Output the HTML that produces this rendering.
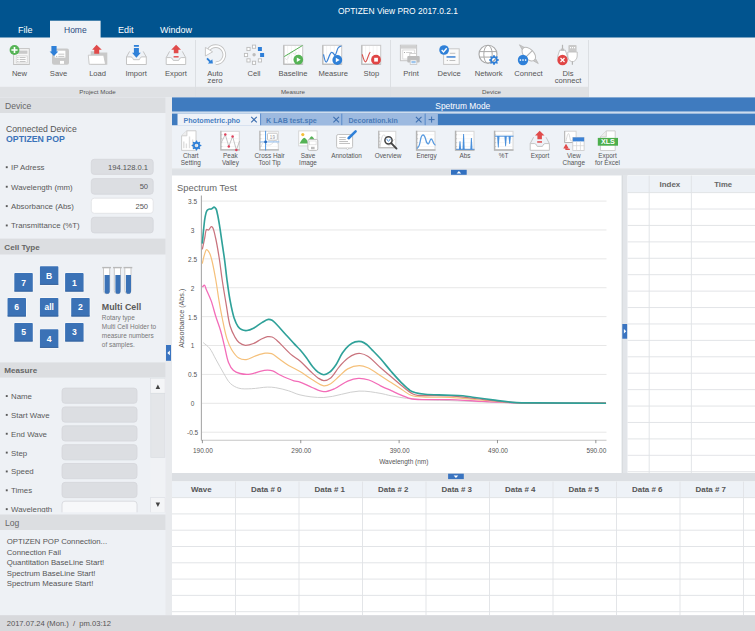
<!DOCTYPE html>
<html><head><meta charset="utf-8">
<style>
*{margin:0;padding:0;box-sizing:border-box}
html,body{width:755px;height:631px;overflow:hidden;background:#eef1f5}
svg{position:absolute;left:0;top:0;font-family:"Liberation Sans", sans-serif}
</style></head><body>
<svg width="755" height="631" viewBox="0 0 755 631">

<rect x="0" y="0" width="755" height="38" fill="#01548f"/>
<rect x="0" y="37.5" width="755" height="59.5" fill="#eff2f6"/>
<rect x="50" y="20.7" width="50.6" height="17.5" fill="#eff2f6"/>
<text x="338" y="13.6" font-size="8.45" fill="#fff" font-weight="normal" text-anchor="start" >OPTIZEN View PRO 2017.0.2.1</text>
<text x="18" y="32.6" font-size="9" fill="#fff" font-weight="normal" text-anchor="start" >File</text>
<text x="64" y="32.6" font-size="8.5" fill="#2b4b80" font-weight="normal" text-anchor="start" >Home</text>
<text x="118" y="32.6" font-size="9" fill="#fff" font-weight="normal" text-anchor="start" >Edit</text>
<text x="160" y="32.6" font-size="8.97" fill="#fff" font-weight="normal" text-anchor="start" >Window</text>
<rect x="0" y="86.8" width="195" height="10.4" fill="#dfe1e4"/>
<rect x="196" y="86.8" width="194" height="10.4" fill="#dfe1e4"/>
<rect x="391" y="86.8" width="197" height="10.4" fill="#dfe1e4"/>
<line x1="195.5" y1="40" x2="195.5" y2="97" stroke="#dcdfe3" stroke-width="1"/>
<line x1="390.5" y1="40" x2="390.5" y2="97" stroke="#dcdfe3" stroke-width="1"/>
<line x1="588.5" y1="40" x2="588.5" y2="97" stroke="#dcdfe3" stroke-width="1"/>
<text x="97.5" y="93.8" font-size="6.2" fill="#555" font-weight="normal" text-anchor="middle" >Project Mode</text>
<text x="293" y="93.8" font-size="6.2" fill="#555" font-weight="normal" text-anchor="middle" >Measure</text>
<text x="491.5" y="93.8" font-size="6.2" fill="#555" font-weight="normal" text-anchor="middle" >Device</text>
<text x="19.5" y="76.3" font-size="7.6" fill="#555" font-weight="normal" text-anchor="middle" >New</text>
<text x="58.5" y="76.3" font-size="7.6" fill="#555" font-weight="normal" text-anchor="middle" >Save</text>
<text x="97.6" y="76.3" font-size="7.6" fill="#555" font-weight="normal" text-anchor="middle" >Load</text>
<text x="136.2" y="76.3" font-size="7.6" fill="#555" font-weight="normal" text-anchor="middle" >Import</text>
<text x="176" y="76.3" font-size="7.6" fill="#555" font-weight="normal" text-anchor="middle" >Export</text>
<text x="215" y="76.3" font-size="7.6" fill="#555" font-weight="normal" text-anchor="middle" >Auto</text>
<text x="215" y="83.2" font-size="7.6" fill="#555" font-weight="normal" text-anchor="middle" >zero</text>
<text x="254" y="76.3" font-size="7.6" fill="#555" font-weight="normal" text-anchor="middle" >Cell</text>
<text x="293" y="76.3" font-size="7.6" fill="#555" font-weight="normal" text-anchor="middle" >Baseline</text>
<text x="333.3" y="76.3" font-size="7.6" fill="#555" font-weight="normal" text-anchor="middle" >Measure</text>
<text x="371.4" y="76.3" font-size="7.6" fill="#555" font-weight="normal" text-anchor="middle" >Stop</text>
<text x="411" y="76.3" font-size="7.6" fill="#555" font-weight="normal" text-anchor="middle" >Print</text>
<text x="449.2" y="76.3" font-size="7.6" fill="#555" font-weight="normal" text-anchor="middle" >Device</text>
<text x="488.7" y="76.3" font-size="7.6" fill="#555" font-weight="normal" text-anchor="middle" >Network</text>
<text x="528.5" y="76.3" font-size="7.6" fill="#555" font-weight="normal" text-anchor="middle" >Connect</text>
<text x="568" y="76.3" font-size="7.6" fill="#555" font-weight="normal" text-anchor="middle" >Dis</text>
<text x="568" y="83.2" font-size="7.6" fill="#555" font-weight="normal" text-anchor="middle" >connect</text>
<rect x="13.6" y="48.6" width="15.7" height="15.9" fill="#f6f6f6" stroke="#c4c4c4" stroke-width="1"/>
<rect x="15.8" y="50.6" width="11.6" height="3.2" fill="#c9c9c9"/>
<rect x="16.2" y="55.9" width="11" height="7" fill="#fff" stroke="#d0d0d0" stroke-width="0.8"/>
<rect x="17.4" y="57.1" width="1" height="1" fill="#aaa"/><rect x="19.6" y="57.15" width="6" height="0.9" fill="#bdbdbd"/>
<rect x="17.4" y="59.0" width="1" height="1" fill="#aaa"/><rect x="19.6" y="59.05" width="6" height="0.9" fill="#bdbdbd"/>
<rect x="17.4" y="60.9" width="1" height="1" fill="#aaa"/><rect x="19.6" y="60.949999999999996" width="6" height="0.9" fill="#bdbdbd"/>
<circle cx="14.5" cy="50" r="4.9" fill="#55b355"/>
<path d="M14.5,46.9 V53.1 M11.4,50 H17.6" stroke="#fff" stroke-width="1.6"/>
<rect x="52" y="48.6" width="17" height="16.1" rx="2" fill="#c9c9c9"/>
<rect x="54.7" y="50.7" width="10.7" height="6.9" fill="#fff"/>
<rect x="58.3" y="53.7" width="6" height="0.9" fill="#c0c0c0"/><rect x="58.3" y="55.9" width="6" height="0.9" fill="#c0c0c0"/><rect x="56.2" y="55.9" width="1" height="1" fill="#aaa"/>
<rect x="60" y="60.9" width="4" height="2.9" fill="#fff"/>
<path d="M51.4,46 H56.6 V51.4 H58.3 L54,55.9 L49.6,51.4 H51.4 Z" fill="#2f80d8"/>
<path d="M90.7,51.2 H98 L99.5,52.6 H107.3 V64.7 H90.7 Z" fill="#c9c9c9"/>
<path d="M88.3,55.2 H103.7 L105.6,64.3 H89.2 Z" fill="#fff" stroke="#c5c5c5" stroke-width="0.9" stroke-linejoin="round"/>
<path d="M96.6,44.8 L101.8,49.7 H99.2 V53.8 H94.2 V49.7 H92.1 Z" fill="#e04b4b"/>
<path d="M126.5,56.9 L129.6,51.4 M146.3,56.9 L143.20000000000002,51.4" stroke="#c4c4c4" stroke-width="1" fill="none"/>
<path d="M126.5,56.9 H131.0 Q132.0,56.9 132.8,58.4 L133.5,59.699999999999996 H139.3 L140.0,58.4 Q140.8,56.9 141.8,56.9 H146.3 V64.5 H126.5 Z" fill="#fff" stroke="#c4c4c4" stroke-width="1" stroke-linejoin="round"/>
<rect x="133.9" y="45" width="5" height="1.8" fill="#2f80d8"/>
<path d="M133.9,48.1 H138.9 V52.8 H140.8 L136.4,57.8 L132,52.8 H133.9 Z" fill="#2f80d8"/>
<path d="M166.2,57.6 L169.6,51.4 M185.7,57.6 L182.29999999999998,51.4" stroke="#c4c4c4" stroke-width="1" fill="none"/>
<path d="M166.2,57.6 H170.7 Q171.7,57.6 172.5,59.1 L173.2,60.4 H178.7 L179.39999999999998,59.1 Q180.2,57.6 181.2,57.6 H185.7 V64.5 H166.2 Z" fill="#fff" stroke="#c4c4c4" stroke-width="1" stroke-linejoin="round"/>
<path d="M176.1,44.8 L181,49.7 H178.4 V53.3 H173.8 V49.7 H171.2 Z" fill="#e04b4b"/>
<rect x="173.6" y="56.1" width="5" height="1.4" fill="#e04b4b"/>
<path d="M215.70,63.25 A8.55,8.55 0 1 0 208.45,50.17" fill="none" stroke="#c2c2c2" stroke-width="3.6"/>
<path d="M215.70,63.25 A8.55,8.55 0 1 0 208.45,50.17" fill="none" stroke="#fff" stroke-width="1.8"/>
<path d="M205.4,47.4 L205.4,56 L212.6,51.8 Z" fill="#fff" stroke="#c2c2c2" stroke-width="0.9" stroke-linejoin="round"/>
<path d="M207,58.4 L210.6,62" stroke="#2f80d8" stroke-width="1.8"/><path d="M212.9,63.6 L207.8,63.6 L212.3,59.2 Z" fill="#2f80d8"/>
<circle cx="254.1" cy="54.7" r="1.7" fill="#bdbdbd"/>
<rect x="252.4" y="45.1" width="3.2" height="3.2" fill="#fff" stroke="#bcbcbc" stroke-width="0.9"/>
<rect x="257.9" y="47" width="4" height="4" fill="#2f7fd8"/>
<rect x="260.1" y="53" width="4" height="4" fill="#2f7fd8"/>
<rect x="258.29999999999995" y="58.8" width="3.2" height="3.2" fill="#fff" stroke="#bcbcbc" stroke-width="0.9"/>
<rect x="252.4" y="61.199999999999996" width="3.2" height="3.2" fill="#fff" stroke="#bcbcbc" stroke-width="0.9"/>
<rect x="246.9" y="58.8" width="3.2" height="3.2" fill="#fff" stroke="#bcbcbc" stroke-width="0.9"/>
<rect x="244.4" y="53.4" width="3.2" height="3.2" fill="#fff" stroke="#bcbcbc" stroke-width="0.9"/>
<rect x="246.9" y="47.4" width="3.2" height="3.2" fill="#fff" stroke="#bcbcbc" stroke-width="0.9"/>
<rect x="283.8" y="45.3" width="18.9" height="18.9" fill="#fff" stroke="#c8c8c8" stroke-width="1"/>
<path d="M283.8,45.3 V64.2 H302.7" fill="none" stroke="#b8b8b8" stroke-width="1.1"/>
<line x1="287.60" y1="46" x2="287.60" y2="63.5" stroke="#ececec" stroke-width="0.6"/>
<line x1="291.40" y1="46" x2="291.40" y2="63.5" stroke="#ececec" stroke-width="0.6"/>
<line x1="295.20" y1="46" x2="295.20" y2="63.5" stroke="#ececec" stroke-width="0.6"/>
<line x1="299.00" y1="46" x2="299.00" y2="63.5" stroke="#ececec" stroke-width="0.6"/>
<path d="M285,58 Q287,62 289,56 T293,53 T297,52" fill="none" stroke="#e0e0e0" stroke-width="0.8"/>
<line x1="284.2" y1="56.6" x2="302.5" y2="45.5" stroke="#55b355" stroke-width="1"/>
<circle cx="298.3" cy="59.7" r="4.85" fill="#55b355"/><path d="M296.8,57.4 V62 L300.7,59.7 Z" fill="#fff"/>
<rect x="322.8" y="45.3" width="18.9" height="18.9" fill="#fff" stroke="#c8c8c8" stroke-width="1"/>
<path d="M322.8,45.3 V64.2 H341.7" fill="none" stroke="#b8b8b8" stroke-width="1.1"/>
<line x1="326.60" y1="46" x2="326.60" y2="63.5" stroke="#ececec" stroke-width="0.6"/>
<line x1="330.40" y1="46" x2="330.40" y2="63.5" stroke="#ececec" stroke-width="0.6"/>
<line x1="334.20" y1="46" x2="334.20" y2="63.5" stroke="#ececec" stroke-width="0.6"/>
<line x1="338.00" y1="46" x2="338.00" y2="63.5" stroke="#ececec" stroke-width="0.6"/>
<path d="M323.5,54.3 C324.6,60 325.2,62 326.3,62 C327.8,62 329.5,52.4 331.8,52.4 C333.2,52.4 334,54 334.8,55.5 C336.5,55 336.8,48.5 338.5,47.5 C339.5,46.5 340.5,46.2 341.5,46" fill="none" stroke="#3b82d6" stroke-width="1.2"/>
<circle cx="337.3" cy="60" r="4.9" fill="#2f80d8"/><path d="M335.8,57.7 V62.3 L339.7,60 Z" fill="#fff"/>
<rect x="361.8" y="45.3" width="18.9" height="18.9" fill="#fff" stroke="#c8c8c8" stroke-width="1"/>
<path d="M361.8,45.3 V64.2 H380.7" fill="none" stroke="#b8b8b8" stroke-width="1.1"/>
<line x1="365.60" y1="46" x2="365.60" y2="63.5" stroke="#ececec" stroke-width="0.6"/>
<line x1="369.40" y1="46" x2="369.40" y2="63.5" stroke="#ececec" stroke-width="0.6"/>
<line x1="373.20" y1="46" x2="373.20" y2="63.5" stroke="#ececec" stroke-width="0.6"/>
<line x1="377.00" y1="46" x2="377.00" y2="63.5" stroke="#ececec" stroke-width="0.6"/>
<path d="M362.2,54.3 C363.5,59 364.5,61.9 365.6,61.9 C367,61.9 368.5,53.5 370.3,52.1" fill="none" stroke="#d9534f" stroke-width="1.2"/>
<circle cx="376" cy="59.7" r="4.9" fill="#e04545"/><rect x="374.2" y="57.8" width="3.7" height="3.8" fill="#fff"/>
<rect x="400.4" y="45.2" width="16.2" height="15.5" fill="#f8f8f8" stroke="#c6c6c6" stroke-width="1"/>
<rect x="401" y="45.8" width="15" height="2.8" fill="#d0d0d0"/>
<rect x="402.8" y="50" width="11.5" height="9" fill="#fff" stroke="#d3d3d3" stroke-width="0.7"/>
<rect x="404" y="52" width="1" height="1" fill="#aaa"/><rect x="406" y="52.1" width="6" height="0.8" fill="#c8c8c8"/>
<rect x="409.8" y="53.4" width="6.6" height="3" fill="#fff" stroke="#c9c9c9" stroke-width="0.8"/>
<rect x="407.3" y="56" width="12.4" height="6.5" rx="1" fill="#bdbdbd"/>
<rect x="410.2" y="60" width="6.6" height="4.5" fill="#fff" stroke="#c4c4c4" stroke-width="0.8"/>
<rect x="411.4" y="61" width="4.3" height="2.3" fill="#9cc4ec"/>
<rect x="443.6" y="48.8" width="15.6" height="15.6" fill="#fafafa" stroke="#c8c8c8" stroke-width="1"/>
<rect x="449.8" y="52.8" width="5.5" height="0.9" fill="#b8b8b8"/>
<rect x="446.5" y="56.2" width="9" height="1.5" fill="#3b82d6"/>
<rect x="449.5" y="60" width="5.8" height="0.9" fill="#b8b8b8"/><rect x="446.8" y="59.9" width="1.1" height="1.1" fill="#bbb"/>
<circle cx="444.1" cy="50" r="4.85" fill="#2f80d8"/><path d="M441.7,50.1 L443.5,51.9 L446.7,48.3" fill="none" stroke="#fff" stroke-width="1.4"/>
<circle cx="488" cy="54.3" r="9" fill="#fff" stroke="#a9a9a9" stroke-width="1.1"/>
<ellipse cx="488" cy="54.3" rx="4.2" ry="9" fill="none" stroke="#a9a9a9" stroke-width="1"/>
<path d="M479.6,51.6 H496.4 M479.4,57.1 H496.6" stroke="#a9a9a9" stroke-width="1"/>
<path d="M498.98,59.51 L498.98,60.49 L497.54,61.07 L497.26,61.74 L497.87,63.17 L497.17,63.87 L495.74,63.26 L495.07,63.54 L494.49,64.98 L493.51,64.98 L492.93,63.54 L492.26,63.26 L490.83,63.87 L490.13,63.17 L490.74,61.74 L490.46,61.07 L489.02,60.49 L489.02,59.51 L490.46,58.93 L490.74,58.26 L490.13,56.83 L490.83,56.13 L492.26,56.74 L492.93,56.46 L493.51,55.02 L494.49,55.02 L495.07,56.46 L495.74,56.74 L497.17,56.13 L497.87,56.83 L497.26,58.26 L497.54,58.93 Z M496.00,60 A2.0,2.0 0 1 0 492.00,60 A2.0,2.0 0 1 0 496.00,60 Z" fill="#2f7fd8" fill-rule="evenodd"/>
<path d="M492.6,61.4 L495.4,58.6" stroke="#a9a9a9" stroke-width="0.8"/>
<g transform="translate(528.8,54.1) rotate(45)">
<path d="M-7.8,-1.6 L-13.2,0 L-7.8,1.6 Z M7.8,-1.6 L13.4,0 L7.8,1.6 Z" fill="#c8c8c8" stroke="#b5b5b5" stroke-width="0.7" stroke-linejoin="round"/>
<ellipse cx="0" cy="0" rx="8.2" ry="5.0" fill="#fff" stroke="#b9b9b9" stroke-width="1"/>
<line x1="0" y1="-5" x2="0" y2="5" stroke="#b5b5b5" stroke-width="1.1"/>
</g>
<circle cx="523" cy="60" r="5.2" fill="#2f80d8"/>
<rect x="519.7" y="59.3" width="1.4" height="1.5" fill="#fff"/><rect x="522.3" y="59.3" width="1.4" height="1.5" fill="#fff"/><rect x="524.9" y="59.3" width="1.4" height="1.5" fill="#fff"/>
<path d="M562.5,44.8 V50.5" stroke="#b5b5b5" stroke-width="1.2"/>
<path d="M559.7,50.2 H565.3 L567.3,56 V58 H557.8 V56 Z" fill="#fff" stroke="#bdbdbd" stroke-width="0.9"/>
<rect x="560.8" y="48.6" width="3.4" height="2" fill="#bdbdbd"/>
<circle cx="562.5" cy="60" r="5.2" fill="#e04545"/><path d="M560.5,58 L564.5,62 M564.5,58 L560.5,62" stroke="#fff" stroke-width="1.2"/>
<rect x="568.4" y="45" width="8.2" height="7" rx="1" fill="#c9c9c9"/>
<rect x="570" y="47" width="1.1" height="1.3" fill="#fff"/><rect x="572" y="47" width="1.1" height="1.3" fill="#fff"/><rect x="574" y="47" width="1.1" height="1.3" fill="#fff"/>
<path d="M567.8,52 H577.2 V56 C577.2,59 575,61 573.5,61.5 H571.3 C569.8,61 567.8,59 567.8,56 Z" fill="#fff" stroke="#bdbdbd" stroke-width="0.9"/>
<path d="M572.4,61.5 V64.8" stroke="#b5b5b5" stroke-width="1.2"/>
<rect x="0" y="97.2" width="165.5" height="518" fill="#eef1f5"/>
<rect x="165.5" y="97.2" width="6.5" height="518" fill="#e8eaed"/>
<rect x="0" y="97.4" width="165.5" height="15.599999999999994" fill="#dcdee1"/>
<text x="5" y="108.60000000000001" font-size="8.6" fill="#666" font-weight="normal" text-anchor="start" >Device</text>
<text x="6" y="131.8" font-size="8.66" fill="#555" font-weight="normal" text-anchor="start" >Connected Device</text>
<text x="6" y="142" font-size="8.76" fill="#3b73b9" font-weight="bold" text-anchor="start" >OPTIZEN POP</text>
<rect x="91.3" y="159.3" width="61.9" height="15.099999999999989" rx="3" fill="#dcdee2" stroke="#d4d6da" stroke-width="0.8"/>
<text x="148.1" y="170" font-size="7.6" fill="#555" font-weight="normal" text-anchor="end" >194.128.0.1</text>
<rect x="5.8" y="166.25" width="1.9" height="1.9" fill="#5a5a5a"/>
<text x="11" y="170.15" font-size="7.86" fill="#5a5a5a" font-weight="normal" text-anchor="start" >IP Adress</text>
<rect x="91.3" y="178.60000000000002" width="61.9" height="15.599999999999989" rx="3" fill="#dcdee2" stroke="#d4d6da" stroke-width="0.8"/>
<text x="148.1" y="189.3" font-size="7.6" fill="#555" font-weight="normal" text-anchor="end" >50</text>
<rect x="5.8" y="185.8" width="1.9" height="1.9" fill="#5a5a5a"/>
<text x="11" y="189.70000000000002" font-size="7.86" fill="#5a5a5a" font-weight="normal" text-anchor="start" >Wavelength (mm)</text>
<rect x="91.3" y="198.20000000000002" width="61.9" height="15.099999999999989" rx="3" fill="#fff" stroke="#dfe1e4" stroke-width="0.8"/>
<text x="148.1" y="208.9" font-size="7.6" fill="#555" font-weight="normal" text-anchor="end" >250</text>
<rect x="5.8" y="205.15" width="1.9" height="1.9" fill="#5a5a5a"/>
<text x="11" y="209.05" font-size="7.86" fill="#5a5a5a" font-weight="normal" text-anchor="start" >Absorbance (Abs)</text>
<rect x="91.3" y="217.3" width="61.9" height="15.599999999999989" rx="3" fill="#dcdee2" stroke="#d4d6da" stroke-width="0.8"/>
<rect x="5.8" y="224.5" width="1.9" height="1.9" fill="#5a5a5a"/>
<text x="11" y="228.4" font-size="7.86" fill="#5a5a5a" font-weight="normal" text-anchor="start" >Transmittance (%T)</text>
<rect x="0" y="238.6" width="165.5" height="15.900000000000006" fill="#dcdee1"/>
<text x="4.3" y="249.6" font-size="8.1" fill="#666" font-weight="bold" text-anchor="start" >Cell Type</text>
<rect x="39.3" y="265.7" width="19.7" height="19.7" rx="1.5" fill="#fff" opacity="0.9"/>
<rect x="39.9" y="266.3" width="18.5" height="18.5" rx="0.8" fill="#3b72b6"/>
<rect x="39.9" y="283.90000000000003" width="18.5" height="0.9" fill="#325f98"/>
<text x="49.15" y="278.7" font-size="8.6" font-weight="bold" fill="#fff" text-anchor="middle">B</text>
<rect x="13.700000000000001" y="272.5" width="19.7" height="19.7" rx="1.5" fill="#fff" opacity="0.9"/>
<rect x="14.3" y="273.1" width="18.5" height="18.5" rx="0.8" fill="#3b72b6"/>
<rect x="14.3" y="290.70000000000005" width="18.5" height="0.9" fill="#325f98"/>
<text x="23.55" y="285.5" font-size="8.6" font-weight="bold" fill="#fff" text-anchor="middle">7</text>
<rect x="64.5" y="272.5" width="19.7" height="19.7" rx="1.5" fill="#fff" opacity="0.9"/>
<rect x="65.1" y="273.1" width="18.5" height="18.5" rx="0.8" fill="#3b72b6"/>
<rect x="65.1" y="290.70000000000005" width="18.5" height="0.9" fill="#325f98"/>
<text x="74.35" y="285.5" font-size="8.6" font-weight="bold" fill="#fff" text-anchor="middle">1</text>
<rect x="6.9" y="297.4" width="19.7" height="19.7" rx="1.5" fill="#fff" opacity="0.9"/>
<rect x="7.5" y="298" width="18.5" height="18.5" rx="0.8" fill="#3b72b6"/>
<rect x="7.5" y="315.6" width="18.5" height="0.9" fill="#325f98"/>
<text x="16.75" y="310.4" font-size="8.6" font-weight="bold" fill="#fff" text-anchor="middle">6</text>
<rect x="39.3" y="297.4" width="19.7" height="19.7" rx="1.5" fill="#fff" opacity="0.9"/>
<rect x="39.9" y="298" width="18.5" height="18.5" rx="0.8" fill="#3b72b6"/>
<rect x="39.9" y="315.6" width="18.5" height="0.9" fill="#325f98"/>
<text x="49.15" y="310.4" font-size="8.4" font-weight="bold" fill="#fff" text-anchor="middle">all</text>
<rect x="70.60000000000001" y="297.4" width="19.7" height="19.7" rx="1.5" fill="#fff" opacity="0.9"/>
<rect x="71.2" y="298" width="18.5" height="18.5" rx="0.8" fill="#3b72b6"/>
<rect x="71.2" y="315.6" width="18.5" height="0.9" fill="#325f98"/>
<text x="80.45" y="310.4" font-size="8.6" font-weight="bold" fill="#fff" text-anchor="middle">2</text>
<rect x="13.700000000000001" y="322.4" width="19.7" height="19.7" rx="1.5" fill="#fff" opacity="0.9"/>
<rect x="14.3" y="323" width="18.5" height="18.5" rx="0.8" fill="#3b72b6"/>
<rect x="14.3" y="340.6" width="18.5" height="0.9" fill="#325f98"/>
<text x="23.55" y="335.4" font-size="8.6" font-weight="bold" fill="#fff" text-anchor="middle">5</text>
<rect x="39.3" y="328.7" width="19.7" height="19.7" rx="1.5" fill="#fff" opacity="0.9"/>
<rect x="39.9" y="329.3" width="18.5" height="18.5" rx="0.8" fill="#3b72b6"/>
<rect x="39.9" y="346.90000000000003" width="18.5" height="0.9" fill="#325f98"/>
<text x="49.15" y="341.7" font-size="8.6" font-weight="bold" fill="#fff" text-anchor="middle">4</text>
<rect x="64.5" y="322.4" width="19.7" height="19.7" rx="1.5" fill="#fff" opacity="0.9"/>
<rect x="65.1" y="323" width="18.5" height="18.5" rx="0.8" fill="#3b72b6"/>
<rect x="65.1" y="340.6" width="18.5" height="0.9" fill="#325f98"/>
<text x="74.35" y="335.4" font-size="8.6" font-weight="bold" fill="#fff" text-anchor="middle">3</text>
<path d="M103.5,268 V290.6 A3.1,3.1 0 0 0 109.7,290.6 V268" fill="#fff" stroke="#c9c9c9" stroke-width="1"/>
<path d="M104.60000000000001,275 V291.2 A2.55,2.55 0 0 0 109.7,291.2 V275 Z" fill="#3b72b6"/>
<rect x="102.2" y="266.9" width="8.8" height="1.4" fill="#b9b9b9"/>
<path d="M114.3,268 V290.6 A3.1,3.1 0 0 0 120.5,290.6 V268" fill="#fff" stroke="#c9c9c9" stroke-width="1"/>
<path d="M115.4,275 V291.2 A2.55,2.55 0 0 0 120.5,291.2 V275 Z" fill="#3b72b6"/>
<rect x="113.0" y="266.9" width="8.8" height="1.4" fill="#b9b9b9"/>
<path d="M124.8,268 V290.6 A3.1,3.1 0 0 0 131.0,290.6 V268" fill="#fff" stroke="#c9c9c9" stroke-width="1"/>
<path d="M125.9,275 V291.2 A2.55,2.55 0 0 0 131.0,291.2 V275 Z" fill="#3b72b6"/>
<rect x="123.5" y="266.9" width="8.8" height="1.4" fill="#b9b9b9"/>
<text x="101.8" y="309.7" font-size="8.9" font-weight="bold" fill="#5a5a5a">Multi Cell</text>
<text x="101.8" y="320.20" font-size="6.45" fill="#777">Rotary type</text>
<text x="101.8" y="329.25" font-size="6.45" fill="#777">Multi Cell Holder to</text>
<text x="101.8" y="338.30" font-size="6.45" fill="#777">measure numbers</text>
<text x="101.8" y="347.35" font-size="6.45" fill="#777">of samples.</text>
<rect x="0" y="362.4" width="165.5" height="15.200000000000045" fill="#dcdee1"/>
<text x="4.3" y="373.4" font-size="8.1" fill="#666" font-weight="bold" text-anchor="start" >Measure</text>
<svg x="0" y="377.6" width="165.5" height="134.6" viewBox="0 377.6 165.5 134.6" overflow="hidden">
<rect x="62" y="388.1" width="75" height="15.2" rx="3" fill="#dcdee2" stroke="#d4d6da" stroke-width="0.8"/>
<rect x="5.8" y="395.1" width="1.9" height="1.9" fill="#5a5a5a"/>
<text x="11" y="399.00000000000006" font-size="7.86" fill="#5a5a5a" font-weight="normal" text-anchor="start" >Name</text>
<rect x="62" y="406.95000000000005" width="75" height="15.2" rx="3" fill="#dcdee2" stroke="#d4d6da" stroke-width="0.8"/>
<rect x="5.8" y="413.95000000000005" width="1.9" height="1.9" fill="#5a5a5a"/>
<text x="11" y="417.8500000000001" font-size="7.86" fill="#5a5a5a" font-weight="normal" text-anchor="start" >Start Wave</text>
<rect x="62" y="425.8" width="75" height="15.2" rx="3" fill="#dcdee2" stroke="#d4d6da" stroke-width="0.8"/>
<rect x="5.8" y="432.8" width="1.9" height="1.9" fill="#5a5a5a"/>
<text x="11" y="436.70000000000005" font-size="7.86" fill="#5a5a5a" font-weight="normal" text-anchor="start" >End Wave</text>
<rect x="62" y="444.65000000000003" width="75" height="15.2" rx="3" fill="#dcdee2" stroke="#d4d6da" stroke-width="0.8"/>
<rect x="5.8" y="451.65000000000003" width="1.9" height="1.9" fill="#5a5a5a"/>
<text x="11" y="455.55000000000007" font-size="7.86" fill="#5a5a5a" font-weight="normal" text-anchor="start" >Step</text>
<rect x="62" y="463.5" width="75" height="15.2" rx="3" fill="#dcdee2" stroke="#d4d6da" stroke-width="0.8"/>
<rect x="5.8" y="470.5" width="1.9" height="1.9" fill="#5a5a5a"/>
<text x="11" y="474.40000000000003" font-size="7.86" fill="#5a5a5a" font-weight="normal" text-anchor="start" >Speed</text>
<rect x="62" y="482.35" width="75" height="15.2" rx="3" fill="#dcdee2" stroke="#d4d6da" stroke-width="0.8"/>
<rect x="5.8" y="489.35" width="1.9" height="1.9" fill="#5a5a5a"/>
<text x="11" y="493.25000000000006" font-size="7.86" fill="#5a5a5a" font-weight="normal" text-anchor="start" >Times</text>
<rect x="62" y="501.20000000000005" width="75" height="15.2" rx="3" fill="#f7f8fa" stroke="#d4d6da" stroke-width="0.8"/>
<rect x="5.8" y="508.20000000000005" width="1.9" height="1.9" fill="#5a5a5a"/>
<text x="11" y="512.1" font-size="7.86" fill="#5a5a5a" font-weight="normal" text-anchor="start" >Wavelength</text>
<rect x="150.4" y="377.8" width="14.9" height="135" fill="#f0f2f5"/>
<rect x="150.6" y="378.2" width="14.5" height="15" fill="#f4f5f7" stroke="#dadde1" stroke-width="0.6"/>
<path d="M155.6,389 L160.1,389 L157.85,384.6 Z" fill="#444"/>
<rect x="150.8" y="393.6" width="14.2" height="63.8" fill="#e4e6e9" stroke="#d8dbdf" stroke-width="0.6"/>
<rect x="150.6" y="497.7" width="14.5" height="15" fill="#f4f5f7" stroke="#dadde1" stroke-width="0.6"/>
<path d="M155.6,502.5 L160.1,502.5 L157.85,506.9 Z" fill="#444"/>
</svg>
<rect x="0" y="514.5" width="165.5" height="15.5" fill="#dcdee1"/>
<text x="5" y="525.7" font-size="8.6" fill="#666" font-weight="normal" text-anchor="start" >Log</text>
<text x="6.7" y="544.0" font-size="7.8" fill="#555" font-weight="normal" text-anchor="start" >OPTIZEN POP Connection...</text>
<text x="6.7" y="554.5" font-size="7.8" fill="#555" font-weight="normal" text-anchor="start" >Connection Fail</text>
<text x="6.7" y="565.0" font-size="7.8" fill="#555" font-weight="normal" text-anchor="start" >Quantitation BaseLine Start!</text>
<text x="6.7" y="575.5" font-size="7.8" fill="#555" font-weight="normal" text-anchor="start" >Spectrum BaseLine Start!</text>
<text x="6.7" y="586.0" font-size="7.8" fill="#555" font-weight="normal" text-anchor="start" >Spectrum Measure Start!</text>
<rect x="166" y="345" width="5" height="15.8" fill="#3a74c0"/>
<path d="M169.8,350.6 L169.8,355.2 L167.3,352.9 Z" fill="#fff"/>
<rect x="172" y="97.4" width="583" height="14.3" fill="#3f7bbf"/>
<text x="462.8" y="109.0" font-size="8.4" fill="#fff" font-weight="normal" text-anchor="middle" >Spetrum Mode</text>
<rect x="172" y="111.7" width="583" height="1.9" fill="#cddcee"/>
<rect x="172" y="113.6" width="583" height="11.9" fill="#3f7bbf"/>
<rect x="177.5" y="113.6" width="82.5" height="11.9" fill="#eef2f8"/>
<rect x="260.2" y="113.6" width="81.19999999999999" height="11.9" fill="#9dbae0"/>
<rect x="260.2" y="113.6" width="0.9" height="11.9" fill="#5b8ccb"/>
<rect x="341.4" y="113.6" width="83.40000000000003" height="11.9" fill="#9dbae0"/>
<rect x="341.4" y="113.6" width="0.9" height="11.9" fill="#5b8ccb"/>
<rect x="424.8" y="113.6" width="13.099999999999966" height="11.9" fill="#9dbae0"/>
<rect x="424.8" y="113.6" width="0.9" height="11.9" fill="#5b8ccb"/>
<text x="183.5" y="122.5" font-size="7.15" fill="#4a80c2" font-weight="bold" text-anchor="start" >Photometric.pho</text>
<text x="266" y="122.5" font-size="7.15" fill="#4a7ab8" font-weight="bold" text-anchor="start" >K LAB test.spe</text>
<text x="348.5" y="122.5" font-size="7.1" fill="#4a7ab8" font-weight="bold" text-anchor="start" >Decoration.kin</text>
<path d="M251.2,116.8 L256.8,122.39999999999999 M256.8,116.8 L251.2,122.39999999999999" stroke="#3d6fb0" stroke-width="1.1"/>
<path d="M333.4,116.8 L339.0,122.39999999999999 M339.0,116.8 L333.4,122.39999999999999" stroke="#3d6fb0" stroke-width="1.1"/>
<path d="M415.9,116.8 L421.5,122.39999999999999 M421.5,116.8 L415.9,122.39999999999999" stroke="#3d6fb0" stroke-width="1.1"/>
<path d="M431.6,116.6 L431.6,122.6 M428.6,119.6 L434.6,119.6" stroke="#3d6fb0" stroke-width="1"/>
<rect x="172" y="125.5" width="583" height="42.5" fill="#eef2f7"/>
<rect x="172" y="168" width="583" height="7.6" fill="#dee1e5"/>
<rect x="172" y="168" width="583" height="1.2" fill="#e7e9ec"/>
<text x="190.8" y="158.3" font-size="6.4" fill="#555" font-weight="normal" text-anchor="middle" >Chart</text>
<text x="190.8" y="165.20000000000002" font-size="6.4" fill="#555" font-weight="normal" text-anchor="middle" >Setting</text>
<text x="230.4" y="158.3" font-size="6.4" fill="#555" font-weight="normal" text-anchor="middle" >Peak</text>
<text x="230.4" y="165.20000000000002" font-size="6.4" fill="#555" font-weight="normal" text-anchor="middle" >Valley</text>
<text x="269.6" y="158.3" font-size="6.4" fill="#555" font-weight="normal" text-anchor="middle" >Cross Hair</text>
<text x="269.6" y="165.20000000000002" font-size="6.4" fill="#555" font-weight="normal" text-anchor="middle" >Tool Tip</text>
<text x="308" y="158.3" font-size="6.4" fill="#555" font-weight="normal" text-anchor="middle" >Save</text>
<text x="308" y="165.20000000000002" font-size="6.4" fill="#555" font-weight="normal" text-anchor="middle" >Image</text>
<text x="346.5" y="158.3" font-size="6.4" fill="#555" font-weight="normal" text-anchor="middle" >Annotation</text>
<text x="388" y="158.3" font-size="6.4" fill="#555" font-weight="normal" text-anchor="middle" >Overview</text>
<text x="426.5" y="158.3" font-size="6.4" fill="#555" font-weight="normal" text-anchor="middle" >Energy</text>
<text x="465" y="158.3" font-size="6.4" fill="#555" font-weight="normal" text-anchor="middle" >Abs</text>
<text x="503.6" y="158.3" font-size="6.4" fill="#555" font-weight="normal" text-anchor="middle" >%T</text>
<text x="540" y="158.3" font-size="6.4" fill="#555" font-weight="normal" text-anchor="middle" >Export</text>
<text x="573.8" y="158.3" font-size="6.4" fill="#555" font-weight="normal" text-anchor="middle" >View</text>
<text x="573.8" y="165.20000000000002" font-size="6.4" fill="#555" font-weight="normal" text-anchor="middle" >Change</text>
<text x="607.5" y="158.3" font-size="6.4" fill="#555" font-weight="normal" text-anchor="middle" >Export</text>
<text x="607.5" y="165.20000000000002" font-size="6.4" fill="#555" font-weight="normal" text-anchor="middle" >for Excel</text>
<path d="M186.9,130.8 H196 V150.4 H181.6 V135.8 Z" fill="#fff" stroke="#c8c8c8" stroke-width="0.9" stroke-linejoin="round"/>
<path d="M181.6,135.8 H186.9 V130.8" fill="#eee" stroke="#c8c8c8" stroke-width="0.8"/>
<rect x="183.10000000000002" y="141.5" width="1.4" height="6.699999999999989" fill="#dedede"/>
<rect x="185.70000000000002" y="143.5" width="1.4" height="4.699999999999989" fill="#dedede"/>
<rect x="188.8" y="136.5" width="1.4" height="11.699999999999989" fill="#dedede"/>
<rect x="191.9" y="139.5" width="1.4" height="8.699999999999989" fill="#dedede"/>
<path d="M201.38,145.02 L201.38,145.98 L199.94,146.55 L199.67,147.20 L200.29,148.61 L199.61,149.29 L198.20,148.67 L197.55,148.94 L196.98,150.38 L196.02,150.38 L195.45,148.94 L194.80,148.67 L193.39,149.29 L192.71,148.61 L193.33,147.20 L193.06,146.55 L191.62,145.98 L191.62,145.02 L193.06,144.45 L193.33,143.80 L192.71,142.39 L193.39,141.71 L194.80,142.33 L195.45,142.06 L196.02,140.62 L196.98,140.62 L197.55,142.06 L198.20,142.33 L199.61,141.71 L200.29,142.39 L199.67,143.80 L199.94,144.45 Z M198.30,145.5 A1.8,1.8 0 1 0 194.70,145.5 A1.8,1.8 0 1 0 198.30,145.5 Z" fill="#2f80d8" fill-rule="evenodd"/>
<rect x="220.8" y="131.3" width="18.5" height="18.7" fill="#fff" stroke="#d6d6d6" stroke-width="1"/>
<line x1="221.3" y1="134.74" x2="238.8" y2="134.74" stroke="#f0f0f0" stroke-width="0.6"/>
<line x1="221.3" y1="138.68" x2="238.8" y2="138.68" stroke="#f0f0f0" stroke-width="0.6"/>
<line x1="221.3" y1="142.62" x2="238.8" y2="142.62" stroke="#f0f0f0" stroke-width="0.6"/>
<line x1="221.3" y1="146.56" x2="238.8" y2="146.56" stroke="#f0f0f0" stroke-width="0.6"/>
<path d="M220.9,130.8 V149.9 H239.8" fill="none" stroke="#b3b3b3" stroke-width="1.1"/>
<line x1="220.9" y1="134.74" x2="222.3" y2="134.74" stroke="#b8b8b8" stroke-width="0.7"/>
<line x1="220.9" y1="138.68" x2="222.3" y2="138.68" stroke="#b8b8b8" stroke-width="0.7"/>
<line x1="220.9" y1="142.62" x2="222.3" y2="142.62" stroke="#b8b8b8" stroke-width="0.7"/>
<line x1="220.9" y1="146.56" x2="222.3" y2="146.56" stroke="#b8b8b8" stroke-width="0.7"/>
<path d="M221.5,142 L225.3,134.6 L228.8,146.4 L232.6,136.4 L236.4,150 L239.6,141" fill="none" stroke="#bdbdbd" stroke-width="0.9"/>
<circle cx="225.3" cy="134.6" r="1.25" fill="#e0405a"/>
<circle cx="232.6" cy="136.4" r="1.25" fill="#e0405a"/>
<circle cx="228.8" cy="146.4" r="1.25" fill="#e0405a"/>
<circle cx="236.4" cy="150" r="1.25" fill="#e0405a"/>
<rect x="259.8" y="131.3" width="18.5" height="18.7" fill="#fff" stroke="#d6d6d6" stroke-width="1"/>
<line x1="260.3" y1="134.74" x2="277.8" y2="134.74" stroke="#f0f0f0" stroke-width="0.6"/>
<line x1="260.3" y1="138.68" x2="277.8" y2="138.68" stroke="#f0f0f0" stroke-width="0.6"/>
<line x1="260.3" y1="142.62" x2="277.8" y2="142.62" stroke="#f0f0f0" stroke-width="0.6"/>
<line x1="260.3" y1="146.56" x2="277.8" y2="146.56" stroke="#f0f0f0" stroke-width="0.6"/>
<path d="M259.90000000000003,130.8 V149.9 H278.8" fill="none" stroke="#b3b3b3" stroke-width="1.1"/>
<line x1="259.90000000000003" y1="134.74" x2="261.3" y2="134.74" stroke="#b8b8b8" stroke-width="0.7"/>
<line x1="259.90000000000003" y1="138.68" x2="261.3" y2="138.68" stroke="#b8b8b8" stroke-width="0.7"/>
<line x1="259.90000000000003" y1="142.62" x2="261.3" y2="142.62" stroke="#b8b8b8" stroke-width="0.7"/>
<line x1="259.90000000000003" y1="146.56" x2="261.3" y2="146.56" stroke="#b8b8b8" stroke-width="0.7"/>
<path d="M261,147 Q263,140 265,143 T270,145 T274,141 T278,144" fill="none" stroke="#dcdcdc" stroke-width="0.8"/>
<rect x="267.5" y="133.2" width="9.8" height="7" rx="1" fill="#fff" stroke="#bdbdbd" stroke-width="0.9"/>
<text x="272.4" y="138.7" font-size="4.6" fill="#999" text-anchor="middle">19</text>
<line x1="259.8" y1="141.9" x2="279.3" y2="141.9" stroke="#8fbcee" stroke-width="1"/>
<line x1="265.6" y1="130.8" x2="265.6" y2="150.5" stroke="#4d95e2" stroke-width="1"/>
<circle cx="265.6" cy="141.9" r="1.4" fill="#2166bd"/>
<rect x="298.7" y="130.9" width="18.4" height="15" fill="#fff" stroke="#d3d3d3" stroke-width="0.9"/>
<circle cx="302.8" cy="134.6" r="1.6" fill="#f5bf3a"/>
<path d="M299.6,143.6 Q302.5,138 304.3,137.8 Q306,138 308.8,143.6 Z" fill="#55b355"/>
<path d="M307.8,142 Q310.2,136.3 311.6,136.2 Q313.2,136.3 315.6,142 Z" fill="#55b355"/>
<rect x="307.9" y="139.4" width="9.9" height="11" rx="1.5" fill="#fff" stroke="#bdbdbd" stroke-width="1"/>
<rect x="309.6" y="141" width="6.5" height="3.8" fill="#fff" stroke="#d5d5d5" stroke-width="0.6"/>
<rect x="311" y="146.8" width="3.6" height="2.4" fill="#bdbdbd"/>
<rect x="336.6" y="134.5" width="16" height="13.6" rx="1.6" fill="#fff" stroke="#c2c2c2" stroke-width="1"/>
<path d="M346.3,148.1 L347.5,149.8 L348.7,148.1" fill="#fff" stroke="#c2c2c2" stroke-width="0.8"/>
<rect x="339.2" y="136.95000000000002" width="6.600000000000023" height="0.9" fill="#b9b9b9"/>
<rect x="339.2" y="139.15" width="6.600000000000023" height="0.9" fill="#b9b9b9"/>
<rect x="339.2" y="141.05" width="8.800000000000011" height="0.9" fill="#b9b9b9"/>
<rect x="339.2" y="142.95000000000002" width="10.800000000000011" height="0.9" fill="#b9b9b9"/>
<path d="M348.6,138.2 L355.6,131.4" stroke="#2f80d8" stroke-width="2.6" stroke-linecap="round"/>
<rect x="378.7" y="131.3" width="17.1" height="16.5" fill="#fff" stroke="#d6d6d6" stroke-width="1"/>
<path d="M378.8,130.8 V147.70000000000002 H396.3" fill="none" stroke="#b3b3b3" stroke-width="1.1"/>
<line x1="378.8" y1="134.30" x2="380.2" y2="134.30" stroke="#b8b8b8" stroke-width="0.7"/>
<line x1="378.8" y1="137.80" x2="380.2" y2="137.80" stroke="#b8b8b8" stroke-width="0.7"/>
<line x1="378.8" y1="141.30" x2="380.2" y2="141.30" stroke="#b8b8b8" stroke-width="0.7"/>
<line x1="378.8" y1="144.80" x2="380.2" y2="144.80" stroke="#b8b8b8" stroke-width="0.7"/>
<path d="M380,147 C381,140 382,134.8 384,134.8 C386,134.8 387,146 389,146 C391,146 392,140 395.5,139" fill="none" stroke="#d0d0d0" stroke-width="0.8"/>
<circle cx="388.5" cy="140.3" r="3.6" fill="#fff" stroke="#444" stroke-width="1.5"/>
<path d="M386.7,138.8 Q388.5,143.6 390.3,138.8" fill="none" stroke="#5597e0" stroke-width="1"/>
<path d="M391.2,143.1 L396.5,148.6" stroke="#444" stroke-width="1.9" stroke-linecap="round"/>
<rect x="416.5" y="131.3" width="18.5" height="18.7" fill="#fff" stroke="#d6d6d6" stroke-width="1"/>
<line x1="417" y1="134.74" x2="434.5" y2="134.74" stroke="#f0f0f0" stroke-width="0.6"/>
<line x1="417" y1="138.68" x2="434.5" y2="138.68" stroke="#f0f0f0" stroke-width="0.6"/>
<line x1="417" y1="142.62" x2="434.5" y2="142.62" stroke="#f0f0f0" stroke-width="0.6"/>
<line x1="417" y1="146.56" x2="434.5" y2="146.56" stroke="#f0f0f0" stroke-width="0.6"/>
<path d="M416.6,130.8 V149.9 H435.5" fill="none" stroke="#b3b3b3" stroke-width="1.5"/>
<line x1="416.6" y1="134.74" x2="418" y2="134.74" stroke="#b8b8b8" stroke-width="0.7"/>
<line x1="416.6" y1="138.68" x2="418" y2="138.68" stroke="#b8b8b8" stroke-width="0.7"/>
<line x1="416.6" y1="142.62" x2="418" y2="142.62" stroke="#b8b8b8" stroke-width="0.7"/>
<line x1="416.6" y1="146.56" x2="418" y2="146.56" stroke="#b8b8b8" stroke-width="0.7"/>
<path d="M417,148.5 C418.5,147.5 419.5,146 420.3,141 C421,136.5 422,135 423,135 C424.2,135 425,136.5 426,140.5 C426.8,143.5 427.6,144 428.4,143.8 C429.3,143.5 430,139 431.2,139 C432.4,139 433.2,143 434,143.8 C434.6,144.5 435,145 435.5,145" fill="none" stroke="#5a9be0" stroke-width="1.3"/>
<rect x="455.5" y="131.3" width="18.5" height="18.7" fill="#fff" stroke="#d6d6d6" stroke-width="1"/>
<line x1="456" y1="134.74" x2="473.5" y2="134.74" stroke="#f0f0f0" stroke-width="0.6"/>
<line x1="456" y1="138.68" x2="473.5" y2="138.68" stroke="#f0f0f0" stroke-width="0.6"/>
<line x1="456" y1="142.62" x2="473.5" y2="142.62" stroke="#f0f0f0" stroke-width="0.6"/>
<line x1="456" y1="146.56" x2="473.5" y2="146.56" stroke="#f0f0f0" stroke-width="0.6"/>
<path d="M455.6,130.8 V149.9 H474.5" fill="none" stroke="#b3b3b3" stroke-width="1.5"/>
<line x1="455.6" y1="134.74" x2="457" y2="134.74" stroke="#b8b8b8" stroke-width="0.7"/>
<line x1="455.6" y1="138.68" x2="457" y2="138.68" stroke="#b8b8b8" stroke-width="0.7"/>
<line x1="455.6" y1="142.62" x2="457" y2="142.62" stroke="#b8b8b8" stroke-width="0.7"/>
<line x1="455.6" y1="146.56" x2="457" y2="146.56" stroke="#b8b8b8" stroke-width="0.7"/>
<path d="M458.9,149.4 L459.55,141.2 L460.45,141.2 L461.1,149.4 Z" fill="#4a90dc"/>
<path d="M462.5,149.4 L463.15000000000003,134.1 L464.05,134.1 L464.70000000000005,149.4 Z" fill="#4a90dc"/>
<path d="M470.29999999999995,149.4 L470.95,137.9 L471.84999999999997,137.9 L472.5,149.4 Z" fill="#4a90dc"/>
<line x1="456" y1="149.3" x2="474.5" y2="149.3" stroke="#3b86da" stroke-width="0.8"/>
<rect x="494.5" y="131.3" width="18.5" height="18.7" fill="#fff" stroke="#d6d6d6" stroke-width="1"/>
<line x1="495" y1="134.74" x2="512.5" y2="134.74" stroke="#f0f0f0" stroke-width="0.6"/>
<line x1="495" y1="138.68" x2="512.5" y2="138.68" stroke="#f0f0f0" stroke-width="0.6"/>
<line x1="495" y1="142.62" x2="512.5" y2="142.62" stroke="#f0f0f0" stroke-width="0.6"/>
<line x1="495" y1="146.56" x2="512.5" y2="146.56" stroke="#f0f0f0" stroke-width="0.6"/>
<path d="M494.6,130.8 V149.9 H513.5" fill="none" stroke="#b3b3b3" stroke-width="1.5"/>
<line x1="494.6" y1="134.74" x2="496" y2="134.74" stroke="#b8b8b8" stroke-width="0.7"/>
<line x1="494.6" y1="138.68" x2="496" y2="138.68" stroke="#b8b8b8" stroke-width="0.7"/>
<line x1="494.6" y1="142.62" x2="496" y2="142.62" stroke="#b8b8b8" stroke-width="0.7"/>
<line x1="494.6" y1="146.56" x2="496" y2="146.56" stroke="#b8b8b8" stroke-width="0.7"/>
<line x1="495" y1="136.2" x2="513.5" y2="136.2" stroke="#4a90dc" stroke-width="1"/>
<path d="M497.1,136 L497.90000000000003,147.4 L498.7,147.4 L499.5,136 Z" fill="#4a90dc"/>
<path d="M504.40000000000003,136 L505.20000000000005,146.2 L506.0,146.2 L506.8,136 Z" fill="#4a90dc"/>
<path d="M508.5,136 L509.3,144.1 L510.09999999999997,144.1 L510.9,136 Z" fill="#4a90dc"/>
<path d="M530.2,143.6 L533.6,137.2 M549.4,143.6 L546.0,137.2" stroke="#c4c4c4" stroke-width="1" fill="none"/>
<path d="M530.2,143.6 H534.7 Q535.7,143.6 536.5,145.1 L537.2,146.4 H542.4 L543.1,145.1 Q543.9,143.6 544.9,143.6 H549.4 V150.3 H530.2 Z" fill="#fff" stroke="#c4c4c4" stroke-width="1" stroke-linejoin="round"/>
<path d="M539.7,130.8 L544.5,135.5 H541.9 V139.3 H537.4 V135.5 H535 Z" fill="#e04b4b"/>
<rect x="537.2" y="141.2" width="4.8" height="1.5" fill="#e04b4b"/>
<rect x="564.6" y="131.2" width="11.5" height="11.4" fill="#fff" stroke="#cfcfcf" stroke-width="0.9"/>
<path d="M564.7,131 V142.5 H576" fill="none" stroke="#b5b5b5" stroke-width="1"/>
<path d="M566,141 C567,136 567.8,133.5 568.6,133.5 C569.5,133.5 570,141 571,141 C572,141 572.5,139 575,139" fill="none" stroke="#cfcfcf" stroke-width="0.8"/>
<rect x="572.8" y="137.4" width="11.3" height="13.2" fill="#fff" stroke="#c9c9c9" stroke-width="0.8"/>
<rect x="572.8" y="137.4" width="11.3" height="4" fill="#3b82d6"/>
<path d="M572.8,145.7 H584.1 M576.6,141.4 V150.6 M580.4,141.4 V150.6" stroke="#d3d3d3" stroke-width="0.7"/>
<path d="M566,150 V147.3 M564.4,147.8 L566,145 L567.6,147.8 Z M566,149.3 H569.8" fill="#e04b4b" stroke="#e04b4b" stroke-width="1.3"/>
<path d="M606.3,130.9 H615.2 V150.5 H600.4 V136.9 Z" fill="#fff" stroke="#c8c8c8" stroke-width="0.9" stroke-linejoin="round"/>
<path d="M600.4,136.9 H606.3 V130.9" fill="#eee" stroke="#c8c8c8" stroke-width="0.8"/>
<rect x="597.8" y="137.9" width="20.2" height="7.8" fill="#4daf4d"/>
<text x="607.9" y="144.3" font-size="7.2" font-weight="bold" fill="#fff" text-anchor="middle">XLS</text>
<rect x="451" y="169.8" width="15.7" height="5" fill="#3270c0"/>
<path d="M456.6,173.6 L461.2,173.6 L458.9,171.1 Z" fill="#fff"/>
<rect x="172" y="175.6" width="449.8" height="297.4" fill="#fff"/>
<rect x="621.8" y="175.3" width="5.8" height="297.7" fill="#e2e5e9"/>
<rect x="621.8" y="175.3" width="0.8" height="297.7" fill="#d3d6da"/>
<rect x="622.3" y="324" width="5" height="14.7" fill="#3a74c0"/>
<path d="M623.9,329 L623.9,333.6 L626.2,331.3 Z" fill="#fff"/>
<line x1="202" y1="432.19" x2="606.5" y2="432.19" stroke="#e7e7e7" stroke-width="1"/>
<text x="192.6" y="435.09" font-size="6.5" fill="#555" font-weight="normal" text-anchor="middle" >-0.5</text>
<line x1="202" y1="403.30" x2="606.5" y2="403.30" stroke="#e7e7e7" stroke-width="1"/>
<text x="192.6" y="406.20" font-size="6.5" fill="#555" font-weight="normal" text-anchor="middle" >0</text>
<line x1="202" y1="374.41" x2="606.5" y2="374.41" stroke="#e7e7e7" stroke-width="1"/>
<text x="192.6" y="377.31" font-size="6.5" fill="#555" font-weight="normal" text-anchor="middle" >0.5</text>
<line x1="202" y1="345.52" x2="606.5" y2="345.52" stroke="#e7e7e7" stroke-width="1"/>
<text x="192.6" y="348.42" font-size="6.5" fill="#555" font-weight="normal" text-anchor="middle" >1</text>
<line x1="202" y1="316.63" x2="606.5" y2="316.63" stroke="#e7e7e7" stroke-width="1"/>
<text x="192.6" y="319.53" font-size="6.5" fill="#555" font-weight="normal" text-anchor="middle" >1.5</text>
<line x1="202" y1="287.74" x2="606.5" y2="287.74" stroke="#e7e7e7" stroke-width="1"/>
<text x="192.6" y="290.64" font-size="6.5" fill="#555" font-weight="normal" text-anchor="middle" >2</text>
<line x1="202" y1="258.85" x2="606.5" y2="258.85" stroke="#e7e7e7" stroke-width="1"/>
<text x="192.6" y="261.75" font-size="6.5" fill="#555" font-weight="normal" text-anchor="middle" >2.5</text>
<line x1="202" y1="229.96" x2="606.5" y2="229.96" stroke="#e7e7e7" stroke-width="1"/>
<text x="192.6" y="232.86" font-size="6.5" fill="#555" font-weight="normal" text-anchor="middle" >3</text>
<line x1="202" y1="201.07" x2="606.5" y2="201.07" stroke="#e7e7e7" stroke-width="1"/>
<text x="192.6" y="203.97" font-size="6.5" fill="#555" font-weight="normal" text-anchor="middle" >3.5</text>
<line x1="201.4" y1="195.6" x2="201.4" y2="440.5" stroke="#a9a9a9" stroke-width="1.1"/>
<line x1="201.4" y1="440.2" x2="606.5" y2="440.2" stroke="#c6c6c6" stroke-width="1.1"/>
<line x1="202.40" y1="440" x2="202.40" y2="443.2" stroke="#888" stroke-width="0.9"/>
<text x="202.90" y="453.3" font-size="6.5" fill="#555" font-weight="normal" text-anchor="middle" >190.00</text>
<line x1="300.76" y1="440" x2="300.76" y2="443.2" stroke="#888" stroke-width="0.9"/>
<text x="301.26" y="453.3" font-size="6.5" fill="#555" font-weight="normal" text-anchor="middle" >290.00</text>
<line x1="399.12" y1="440" x2="399.12" y2="443.2" stroke="#888" stroke-width="0.9"/>
<text x="399.62" y="453.3" font-size="6.5" fill="#555" font-weight="normal" text-anchor="middle" >390.00</text>
<line x1="497.48" y1="440" x2="497.48" y2="443.2" stroke="#888" stroke-width="0.9"/>
<text x="497.98" y="453.3" font-size="6.5" fill="#555" font-weight="normal" text-anchor="middle" >490.00</text>
<line x1="595.84" y1="440" x2="595.84" y2="443.2" stroke="#888" stroke-width="0.9"/>
<text x="596.34" y="453.3" font-size="6.5" fill="#555" font-weight="normal" text-anchor="middle" >590.00</text>
<text x="403.8" y="463.8" font-size="6.5" fill="#555" font-weight="normal" text-anchor="middle" >Wavelength (nm)</text>
<text x="0" y="0" font-size="7.15" fill="#555" font-weight="normal" text-anchor="middle" transform="translate(184.2,318.3) rotate(-90)">Absorbance (Abs.)</text>
<text x="177" y="190.8" font-size="9.4" fill="#666" font-weight="normal" text-anchor="start" >Spectrum Test</text>
<path d="M203.20,342.60 C205.30,344.43 207.58,345.75 209.50,348.10 C211.87,351.01 213.58,355.26 215.80,359.20 C218.31,363.66 221.20,369.21 223.80,373.50 C226.01,377.15 227.63,380.91 230.30,383.40 C232.72,385.66 235.56,387.28 238.80,388.20 C242.50,389.25 247.03,388.84 251.50,388.70 C256.51,388.55 262.94,387.16 267.40,387.10 C270.64,387.05 272.73,387.22 275.80,387.70 C279.64,388.30 284.49,389.57 288.60,390.80 C292.54,391.98 295.43,393.85 300.00,394.90 C306.42,396.38 315.12,397.81 323.80,397.50 C334.41,397.12 348.75,391.49 359.00,391.10 C366.87,390.80 374.11,392.34 380.00,393.30 C384.34,394.01 386.86,394.99 391.20,395.80 C397.13,396.91 404.30,398.22 412.40,399.00 C423.13,400.03 435.71,400.04 450.00,400.60 C468.92,401.35 492.29,402.54 516.00,403.00 C543.67,403.53 576.00,403.13 606.00,403.20" fill="none" stroke="#cfcfcf" stroke-width="1.0" stroke-linejoin="round"/>
<path d="M202.40,287.10 C203.07,286.43 203.81,284.99 204.40,285.10 C205.17,285.25 205.52,287.70 206.30,289.50 C207.54,292.36 209.62,296.52 211.10,300.60 C212.83,305.38 214.17,311.36 215.80,316.50 C217.35,321.38 219.16,325.80 220.60,330.70 C222.11,335.82 223.28,341.31 224.60,346.60 C225.91,351.87 226.73,358.14 228.50,362.40 C229.83,365.61 231.23,368.43 233.30,370.30 C235.16,371.98 237.45,372.84 240.00,373.50 C243.02,374.28 247.03,374.48 250.40,374.10 C253.70,373.73 256.99,371.96 260.00,371.30 C262.61,370.73 265.14,370.22 267.40,370.20 C269.31,370.18 270.85,370.29 272.70,370.90 C275.03,371.67 277.21,373.60 280.10,375.00 C283.95,376.87 290.18,379.63 293.90,380.80 C296.30,381.55 297.67,381.34 300.00,382.10 C303.38,383.21 307.98,385.88 312.00,387.50 C315.92,389.08 319.90,391.58 323.80,391.70 C327.56,391.82 331.25,390.10 335.00,388.50 C339.21,386.70 343.54,382.80 347.70,381.10 C351.29,379.63 354.75,378.58 358.30,378.40 C361.82,378.22 365.37,378.89 368.90,380.00 C372.80,381.23 376.78,383.99 380.60,385.80 C384.21,387.51 387.66,389.02 391.20,390.60 C394.73,392.18 398.24,393.89 401.80,395.30 C405.31,396.69 407.70,398.16 412.40,399.00 C421.01,400.53 438.74,399.20 450.00,399.60 C459.18,399.93 465.64,400.53 475.00,401.00 C486.98,401.60 499.68,402.41 516.00,402.80 C540.17,403.38 576.00,403.07 606.00,403.20" fill="none" stroke="#f36cb8" stroke-width="1.3" stroke-linejoin="round"/>
<path d="M202.30,263.60 C202.93,260.90 203.42,257.96 204.20,255.50 C204.89,253.35 205.61,249.76 206.60,249.60 C207.43,249.47 208.70,251.57 209.50,253.00 C210.53,254.84 211.02,257.04 211.80,260.00 C213.10,264.93 214.61,273.27 215.80,280.00 C217.01,286.80 217.89,294.03 219.00,300.60 C220.03,306.65 220.96,311.97 222.20,318.00 C223.56,324.59 225.02,332.86 226.90,338.60 C228.32,342.94 229.64,346.40 231.70,349.70 C233.65,352.83 236.11,356.39 238.80,358.00 C241.04,359.34 243.61,359.81 246.20,359.60 C249.20,359.36 252.50,356.97 255.70,355.90 C258.87,354.84 262.41,353.51 265.30,353.20 C267.60,352.96 269.58,352.90 271.60,353.60 C273.84,354.37 275.60,356.34 278.00,358.00 C281.09,360.14 284.93,363.15 288.60,365.40 C292.27,367.65 296.21,369.23 300.00,371.50 C304.01,373.90 307.96,377.08 312.00,379.50 C315.89,381.83 320.33,385.46 323.80,385.80 C326.35,386.05 328.41,384.97 330.70,383.70 C333.56,382.12 336.37,378.77 339.20,376.30 C342.03,373.83 344.42,370.66 347.70,368.90 C351.09,367.08 355.73,365.75 359.30,365.70 C362.35,365.66 364.78,366.53 367.80,367.80 C371.75,369.46 376.55,373.13 380.60,375.70 C384.31,378.05 387.67,380.30 391.20,382.60 C394.73,384.90 398.24,387.29 401.80,389.50 C405.31,391.68 407.54,394.35 412.40,395.80 C420.89,398.33 438.75,396.69 450.00,397.40 C459.19,397.98 465.64,398.74 475.00,399.50 C486.98,400.47 499.67,402.02 516.00,402.70 C540.16,403.71 576.00,403.03 606.00,403.20" fill="none" stroke="#f5c07a" stroke-width="1.2" stroke-linejoin="round"/>
<path d="M202.30,249.40 C203.10,245.60 203.94,241.52 204.70,238.00 C205.36,234.96 205.49,230.17 206.60,229.50 C207.13,229.18 207.87,230.20 208.50,230.00 C209.44,229.70 210.48,226.71 211.30,226.60 C211.81,226.53 212.26,226.97 212.70,227.60 C213.81,229.19 214.67,233.95 215.60,238.00 C216.87,243.56 218.12,251.16 219.20,258.00 C220.33,265.15 221.08,272.53 222.20,280.00 C223.37,287.79 224.76,296.01 226.10,303.80 C227.40,311.33 228.27,319.97 230.10,326.00 C231.44,330.40 233.18,334.04 234.90,337.00 C236.20,339.24 237.28,341.12 239.00,342.50 C240.71,343.88 242.94,345.06 245.20,345.30 C247.73,345.57 250.87,344.49 253.50,343.50 C256.14,342.50 258.56,340.47 261.00,339.30 C263.18,338.25 265.40,337.03 267.40,336.70 C269.05,336.43 270.61,336.48 272.10,337.00 C273.72,337.57 274.84,338.64 276.70,340.20 C280.19,343.12 286.29,350.40 290.60,354.10 C293.92,356.95 296.87,358.33 300.00,361.00 C303.54,364.02 307.34,368.48 310.60,371.50 C313.24,373.95 315.58,376.33 318.00,377.90 C319.96,379.17 321.77,380.54 323.80,380.60 C325.99,380.67 328.50,379.56 330.70,377.90 C333.72,375.63 336.25,370.17 339.20,366.80 C341.93,363.68 344.81,360.50 347.70,358.30 C350.13,356.45 352.76,354.86 355.10,354.10 C356.95,353.50 358.51,353.28 360.40,353.50 C362.69,353.77 365.17,354.61 367.80,356.20 C371.70,358.55 376.51,364.21 380.60,367.80 C384.27,371.02 387.67,373.80 391.20,376.80 C394.73,379.80 398.22,382.95 401.80,385.80 C405.29,388.58 409.35,392.17 412.40,393.70 C414.37,394.69 415.15,394.90 417.70,395.30 C423.87,396.26 439.94,395.18 450.00,395.80 C458.88,396.35 465.64,397.52 475.00,398.50 C486.98,399.76 499.66,401.82 516.00,402.70 C540.15,404.00 576.00,403.03 606.00,403.20" fill="none" stroke="#c9737d" stroke-width="1.25" stroke-linejoin="round"/>
<path d="M202.30,243.70 C202.77,238.63 203.20,233.20 203.70,228.50 C204.14,224.42 204.43,220.36 205.10,217.10 C205.61,214.58 205.99,211.83 207.00,210.50 C207.65,209.64 208.61,209.23 209.40,209.00 C210.04,208.82 210.63,209.20 211.30,209.00 C212.20,208.73 213.36,207.01 214.20,207.10 C214.94,207.18 215.59,208.12 216.10,209.00 C216.82,210.26 217.04,212.23 217.50,214.30 C218.14,217.18 218.76,220.84 219.40,224.70 C220.19,229.50 220.97,235.28 221.80,240.90 C222.70,247.00 223.74,253.55 224.60,260.00 C225.48,266.58 226.09,273.29 227.00,280.00 C227.92,286.82 228.86,294.05 230.10,300.60 C231.25,306.67 232.50,313.29 234.10,318.00 C235.26,321.41 236.49,324.47 238.00,326.50 C239.06,327.94 240.09,328.93 241.50,329.60 C243.04,330.33 245.11,330.67 247.00,330.50 C249.10,330.31 251.27,329.32 253.50,328.20 C256.20,326.85 259.23,324.14 261.90,322.60 C264.16,321.30 266.50,319.61 268.40,319.40 C269.78,319.25 270.88,319.65 272.10,320.30 C273.66,321.13 274.99,322.78 276.70,324.50 C279.11,326.93 282.15,330.56 285.00,333.70 C288.01,337.02 291.56,340.98 294.30,343.90 C296.41,346.15 298.10,347.64 300.00,349.80 C302.13,352.22 304.32,355.02 306.40,357.80 C308.56,360.68 310.58,364.27 312.70,366.80 C314.45,368.89 316.06,370.76 318.00,372.10 C319.79,373.33 321.86,374.69 323.80,374.70 C325.76,374.71 327.85,373.48 329.70,372.10 C331.97,370.41 334.03,367.56 336.00,364.70 C338.31,361.35 340.09,356.35 342.40,353.00 C344.37,350.14 346.42,347.50 348.70,345.60 C350.69,343.94 352.89,342.55 355.10,341.90 C357.14,341.30 359.45,341.15 361.40,341.60 C363.31,342.04 365.02,343.24 366.70,344.50 C368.57,345.90 370.03,347.79 372.00,349.80 C374.53,352.39 377.64,355.49 380.60,358.80 C384.01,362.62 387.62,367.40 391.20,371.50 C394.69,375.49 398.37,379.73 401.80,383.10 C404.71,385.96 407.67,388.99 410.30,390.60 C412.17,391.75 413.54,392.13 415.60,392.70 C418.27,393.45 421.34,393.91 425.10,394.30 C430.51,394.86 438.54,394.86 445.00,395.10 C451.12,395.33 457.55,395.21 462.90,395.70 C467.28,396.10 470.43,396.88 474.80,397.50 C480.16,398.26 486.30,399.11 492.70,399.90 C500.06,400.81 509.05,402.12 516.50,402.60 C523.04,403.02 526.83,402.82 535.00,402.90 C551.00,403.06 582.33,403.10 606.00,403.20" fill="none" stroke="#2fa199" stroke-width="1.65" stroke-linejoin="round"/>
<rect x="627.6" y="175.3" width="127.4" height="297.7" fill="#fff"/>
<rect x="627.6" y="175.6" width="127.4" height="17" fill="#eef2f7"/>
<line x1="627.6" y1="192.60" x2="755" y2="192.60" stroke="#dfe1e4" stroke-width="0.9"/>
<line x1="627.6" y1="209.02" x2="755" y2="209.02" stroke="#dfe1e4" stroke-width="0.9"/>
<line x1="627.6" y1="225.44" x2="755" y2="225.44" stroke="#dfe1e4" stroke-width="0.9"/>
<line x1="627.6" y1="241.86" x2="755" y2="241.86" stroke="#dfe1e4" stroke-width="0.9"/>
<line x1="627.6" y1="258.28" x2="755" y2="258.28" stroke="#dfe1e4" stroke-width="0.9"/>
<line x1="627.6" y1="274.70" x2="755" y2="274.70" stroke="#dfe1e4" stroke-width="0.9"/>
<line x1="627.6" y1="291.12" x2="755" y2="291.12" stroke="#dfe1e4" stroke-width="0.9"/>
<line x1="627.6" y1="307.54" x2="755" y2="307.54" stroke="#dfe1e4" stroke-width="0.9"/>
<line x1="627.6" y1="323.96" x2="755" y2="323.96" stroke="#dfe1e4" stroke-width="0.9"/>
<line x1="627.6" y1="340.38" x2="755" y2="340.38" stroke="#dfe1e4" stroke-width="0.9"/>
<line x1="627.6" y1="356.80" x2="755" y2="356.80" stroke="#dfe1e4" stroke-width="0.9"/>
<line x1="627.6" y1="373.22" x2="755" y2="373.22" stroke="#dfe1e4" stroke-width="0.9"/>
<line x1="627.6" y1="389.64" x2="755" y2="389.64" stroke="#dfe1e4" stroke-width="0.9"/>
<line x1="627.6" y1="406.06" x2="755" y2="406.06" stroke="#dfe1e4" stroke-width="0.9"/>
<line x1="627.6" y1="422.48" x2="755" y2="422.48" stroke="#dfe1e4" stroke-width="0.9"/>
<line x1="627.6" y1="438.90" x2="755" y2="438.90" stroke="#dfe1e4" stroke-width="0.9"/>
<line x1="627.6" y1="455.32" x2="755" y2="455.32" stroke="#dfe1e4" stroke-width="0.9"/>
<line x1="627.6" y1="471.74" x2="755" y2="471.74" stroke="#dfe1e4" stroke-width="0.9"/>
<line x1="649.2" y1="175.6" x2="649.2" y2="473" stroke="#e0e2e5" stroke-width="0.9"/>
<line x1="691.4" y1="175.6" x2="691.4" y2="473" stroke="#e0e2e5" stroke-width="0.9"/>
<text x="669.9" y="187.4" font-size="7.96" fill="#666" font-weight="bold" text-anchor="middle" >Index</text>
<text x="723.1" y="187.4" font-size="7.7" fill="#666" font-weight="bold" text-anchor="middle" >Time</text>
<rect x="172" y="473" width="583" height="8.6" fill="#dcdfe3"/>
<rect x="448.1" y="473.7" width="15.7" height="5.4" fill="#3a74c0"/>
<path d="M453.6,475.5 L458.3,475.5 L455.95,477.9 Z" fill="#fff"/>
<rect x="172" y="481.6" width="583" height="133.6" fill="#fff"/>
<rect x="172" y="481.6" width="583" height="16" fill="#eef2f7"/>
<line x1="172" y1="497.60" x2="755" y2="497.60" stroke="#dfe1e4" stroke-width="0.9"/>
<line x1="172" y1="513.90" x2="755" y2="513.90" stroke="#dfe1e4" stroke-width="0.9"/>
<line x1="172" y1="530.20" x2="755" y2="530.20" stroke="#dfe1e4" stroke-width="0.9"/>
<line x1="172" y1="546.50" x2="755" y2="546.50" stroke="#dfe1e4" stroke-width="0.9"/>
<line x1="172" y1="562.80" x2="755" y2="562.80" stroke="#dfe1e4" stroke-width="0.9"/>
<line x1="172" y1="579.10" x2="755" y2="579.10" stroke="#dfe1e4" stroke-width="0.9"/>
<line x1="172" y1="595.40" x2="755" y2="595.40" stroke="#dfe1e4" stroke-width="0.9"/>
<line x1="172" y1="611.70" x2="755" y2="611.70" stroke="#dfe1e4" stroke-width="0.9"/>
<line x1="235.50" y1="481.6" x2="235.50" y2="615" stroke="#e0e2e5" stroke-width="0.9"/>
<line x1="299.00" y1="481.6" x2="299.00" y2="615" stroke="#e0e2e5" stroke-width="0.9"/>
<line x1="362.50" y1="481.6" x2="362.50" y2="615" stroke="#e0e2e5" stroke-width="0.9"/>
<line x1="426.00" y1="481.6" x2="426.00" y2="615" stroke="#e0e2e5" stroke-width="0.9"/>
<line x1="489.50" y1="481.6" x2="489.50" y2="615" stroke="#e0e2e5" stroke-width="0.9"/>
<line x1="553.00" y1="481.6" x2="553.00" y2="615" stroke="#e0e2e5" stroke-width="0.9"/>
<line x1="616.50" y1="481.6" x2="616.50" y2="615" stroke="#e0e2e5" stroke-width="0.9"/>
<line x1="680.00" y1="481.6" x2="680.00" y2="615" stroke="#e0e2e5" stroke-width="0.9"/>
<line x1="743.50" y1="481.6" x2="743.50" y2="615" stroke="#e0e2e5" stroke-width="0.9"/>
<text x="201.35" y="492.3" font-size="7.95" fill="#555" font-weight="bold" text-anchor="middle" >Wave</text>
<text x="266.25" y="492.3" font-size="7.95" fill="#555" font-weight="bold" text-anchor="middle" >Data # 0</text>
<text x="329.75" y="492.3" font-size="7.95" fill="#555" font-weight="bold" text-anchor="middle" >Data # 1</text>
<text x="393.25" y="492.3" font-size="7.95" fill="#555" font-weight="bold" text-anchor="middle" >Data # 2</text>
<text x="456.75" y="492.3" font-size="7.95" fill="#555" font-weight="bold" text-anchor="middle" >Data # 3</text>
<text x="520.25" y="492.3" font-size="7.95" fill="#555" font-weight="bold" text-anchor="middle" >Data # 4</text>
<text x="583.75" y="492.3" font-size="7.95" fill="#555" font-weight="bold" text-anchor="middle" >Data # 5</text>
<text x="647.25" y="492.3" font-size="7.95" fill="#555" font-weight="bold" text-anchor="middle" >Data # 6</text>
<text x="710.75" y="492.3" font-size="7.95" fill="#555" font-weight="bold" text-anchor="middle" >Data # 7</text>
<rect x="0" y="615.2" width="755" height="15.8" fill="#d8d9dc"/>
<text x="6.7" y="626.3" font-size="7.6" fill="#555" font-weight="normal" text-anchor="start" >2017.07.24 (Mon.)&#160; / &#160;pm.03:12</text>
</svg></body></html>
